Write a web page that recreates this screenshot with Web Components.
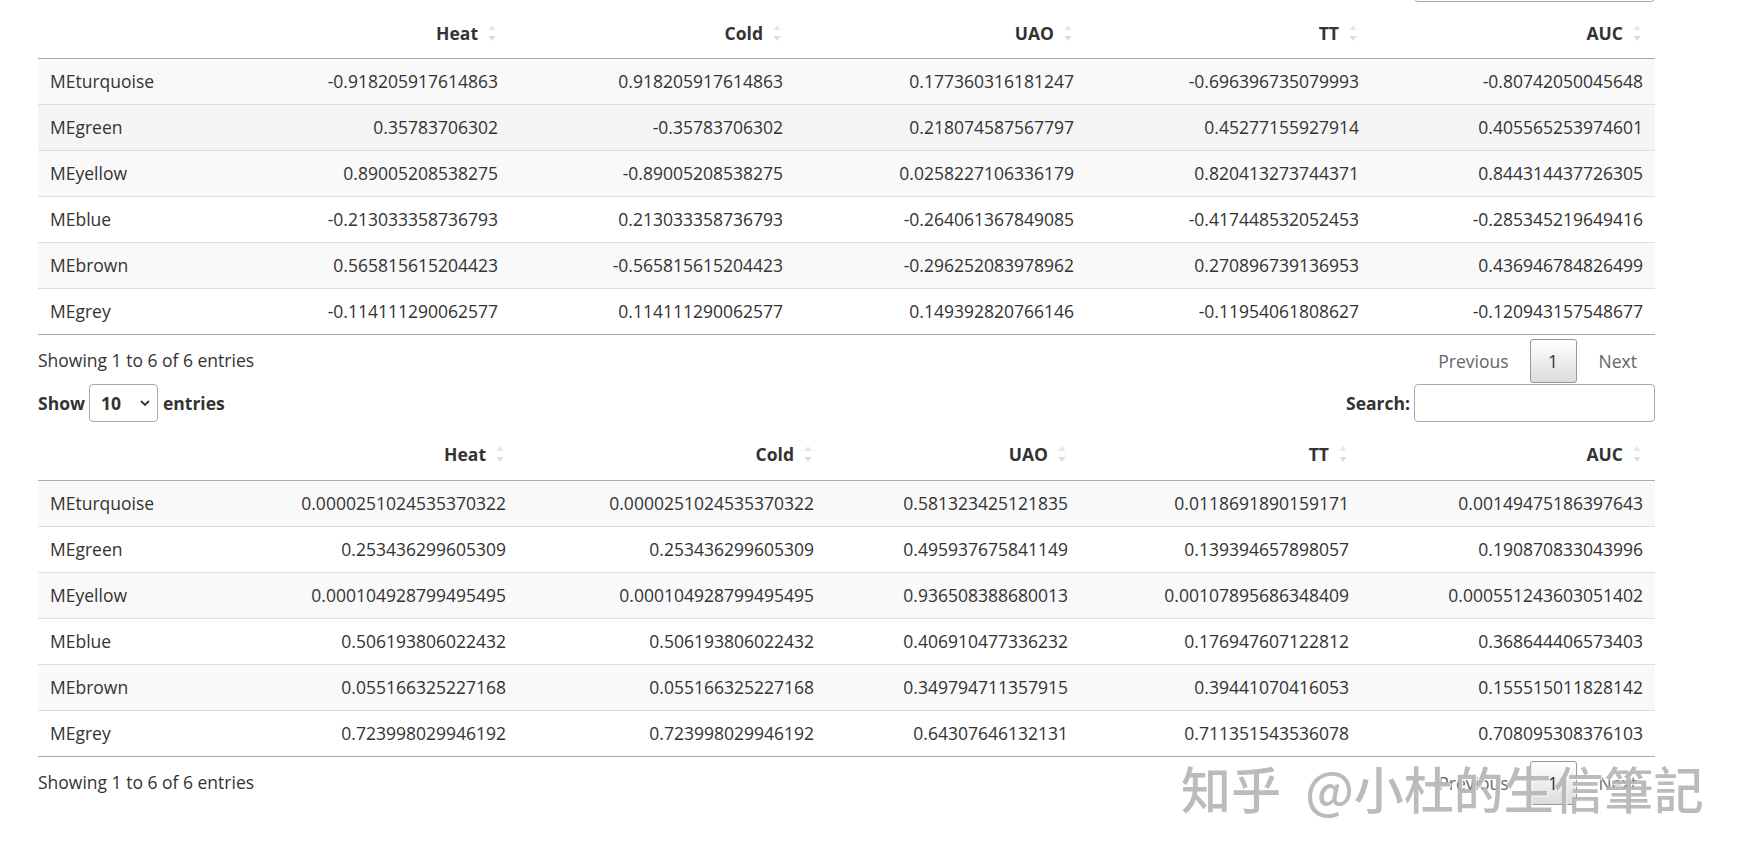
<!DOCTYPE html>
<html lang="en">
<head>
<meta charset="utf-8">
<title>Module trait tables</title>
<style>
    html, body { margin: 0; height: 100%; overflow: hidden; background: #fff; }
    body { font: 17.5px/1.4 "Open Sans", sans-serif; color: #333; }
    main { padding: 0 93px 0 38px; transform: translateY(-36px); }
</style>
</head>
<body>
<main>
    <dt-panel cut cols="150px 322px 285px 291px 285px 284px" head-height="57px">
        <dt-head labels="Heat,Cold,UAO,TT,AUC"></dt-head>
        <dt-row values="MEturquoise,-0.918205917614863,0.918205917614863,0.177360316181247,-0.696396735079993,-0.80742050045648"></dt-row>
        <dt-row hover values="MEgreen,0.35783706302,-0.35783706302,0.218074587567797,0.45277155927914,0.405565253974601"></dt-row>
        <dt-row values="MEyellow,0.89005208538275,-0.89005208538275,0.0258227106336179,0.820413273744371,0.844314437726305"></dt-row>
        <dt-row values="MEblue,-0.213033358736793,0.213033358736793,-0.264061367849085,-0.417448532052453,-0.285345219649416"></dt-row>
        <dt-row values="MEbrown,0.565815615204423,-0.565815615204423,-0.296252083978962,0.270896739136953,0.436946784826499"></dt-row>
        <dt-row values="MEgrey,-0.114111290062577,0.114111290062577,0.149392820766146,-0.11954061808627,-0.120943157548677"></dt-row>
    </dt-panel>
    <dt-panel cols="150px 330px 308px 254px 281px 294px" head-height="59px">
        <dt-head labels="Heat,Cold,UAO,TT,AUC"></dt-head>
        <dt-row values="MEturquoise,0.0000251024535370322,0.0000251024535370322,0.581323425121835,0.0118691890159171,0.00149475186397643"></dt-row>
        <dt-row values="MEgreen,0.253436299605309,0.253436299605309,0.495937675841149,0.139394657898057,0.190870833043996"></dt-row>
        <dt-row values="MEyellow,0.000104928799495495,0.000104928799495495,0.936508388680013,0.00107895686348409,0.000551243603051402"></dt-row>
        <dt-row values="MEblue,0.506193806022432,0.506193806022432,0.406910477336232,0.176947607122812,0.368644406573403"></dt-row>
        <dt-row values="MEbrown,0.055166325227168,0.055166325227168,0.349794711357915,0.39441070416053,0.155515011828142"></dt-row>
        <dt-row values="MEgrey,0.723998029946192,0.723998029946192,0.64307646132131,0.711351543536078,0.708095308376103"></dt-row>
    </dt-panel>
</main>
<zh-watermark>知乎 @小杜的生信筆記</zh-watermark>

<script>
(function () {
    'use strict';

    const sortIcon = `
        <svg width="8" height="18" viewBox="0 0 8 18" aria-hidden="true">
            <path d="M4 1 L7.5 6 H.5 Z" fill="#e6e6e6"/>
            <path d="M.5 12 H7.5 L4 17 Z" fill="#dcdcdc"/>
        </svg>`;

    class DtHead extends HTMLElement {
        connectedCallback () {
            const labels = this.getAttribute('labels').split(',');
            const cells = labels.map(label => `<div class="th"><span>${label}</span>${sortIcon}</div>`).join('');
            this.attachShadow({ mode: 'open' }).innerHTML = `
                <style>
                    :host {
                        display: grid;
                        grid-template-columns: var(--cols);
                        height: var(--head-height);
                        box-sizing: border-box;
                        border-bottom: 1px solid #aaa;
                    }
                    .th {
                        display: flex;
                        justify-content: flex-end;
                        align-items: center;
                        gap: 10px;
                        padding-right: 14px;
                        font-weight: 700;
                    }
                    span { padding-top: 6px; }
                    svg { padding-top: 6px; }
                </style>
                <div></div>${cells}`;
        }
    }

    class DtRow extends HTMLElement {
        connectedCallback () {
            const values = this.getAttribute('values').split(',');
            const cells = values.map(v => `<div class="td">${v}</div>`).join('');
            this.attachShadow({ mode: 'open' }).innerHTML = `
                <style>
                    :host {
                        display: grid;
                        grid-template-columns: var(--cols);
                        height: 46px;
                        box-sizing: border-box;
                        border-bottom: 1px solid #ddd;
                        background: #fff;
                    }
                    :host(:nth-of-type(odd)) { background: #f9f9f9; }
                    :host([hover]) { background: #f5f5f5; }
                    :host(:last-child) { border-bottom-color: #aaa; }
                    .td {
                        display: flex;
                        align-items: center;
                        justify-content: flex-end;
                        padding: 0 12px;
                    }
                    .td:first-of-type { justify-content: flex-start; }
                </style>
                ${cells}`;
        }
    }

    class DtPager extends HTMLElement {
        constructor () {
            super();
            this.attachShadow({ mode: 'open' }).innerHTML = `
                <style>
                    :host { display: flex; padding-top: 4px; color: #666; }
                    a { height: 44px; box-sizing: border-box; line-height: 45px; }
                    .prev { padding: 0 21px 0 18px; }
                    .next { padding: 0 18px 0 22px; }
                    .current {
                        width: 47px;
                        text-align: center;
                        line-height: 43px;
                        color: #333;
                        border: 1px solid #979797;
                        border-radius: 3px;
                        background: linear-gradient(#fff, #dcdcdc);
                    }
                </style>
                <a class="prev">Previous</a><a class="current">1</a><a class="next">Next</a>`;
        }
    }

    const chevron = 'data:image/svg+xml,' + encodeURIComponent(
        '<svg xmlns="http://www.w3.org/2000/svg" width="10" height="6" viewBox="0 0 10 6">' +
        '<path d="M1 1 L5 5 L9 1" fill="none" stroke="#333" stroke-width="1.8"/></svg>');

    class DtPanel extends HTMLElement {
        connectedCallback () {
            this.style.setProperty('--cols', this.getAttribute('cols'));
            if (this.hasAttribute('head-height')) {
                this.style.setProperty('--head-height', this.getAttribute('head-height'));
            }
            // the first table is scrolled off: only the bottom of its search box shows
            const top = this.hasAttribute('cut')
                ? '<span></span><input type="search" aria-label="Search">'
                : `<label>Show <select><option>10</option><option>25</option></select> entries</label>
                   <label>Search: <input type="search"></label>`;
            this.attachShadow({ mode: 'open' }).innerHTML = `
                <style>
                    :host { display: block; --head-height: 59px; }
                    .top, .bottom { display: flex; justify-content: space-between; }
                    .top { height: 38px; align-items: center; font-weight: 700; }
                    .bottom { height: 49px; }
                    .info { line-height: 50px; }
                    label { display: flex; align-items: center; gap: 4px; }
                    select {
                        appearance: none;
                        width: 69px;
                        height: 38px;
                        margin: 0 1px 0 0;
                        padding: 0 0 0 11px;
                        font: inherit;
                        color: inherit;
                        background: #fff url("${chevron}") no-repeat right 7px center;
                        border: 1px solid #aaa;
                        border-radius: 4px;
                    }
                    input {
                        width: 241px;
                        height: 38px;
                        box-sizing: border-box;
                        margin: 0;
                        background: #fff;
                        border: 1px solid #aaa;
                        border-radius: 4px;
                    }
                </style>
                <div class="top">${top}</div>
                <slot></slot>
                <div class="bottom">
                    <div class="info">Showing 1 to 6 of 6 entries</div>
                    <dt-pager></dt-pager>
                </div>`;
        }
    }

    class ZhWatermark extends HTMLElement {
        constructor () {
            super();
            this.attachShadow({ mode: 'open' }).innerHTML = `
                <style>
                    :host {
                        position: absolute;
                        z-index: 5;
                        left: 1181px;
                        top: 752px;
                        font: 500 50px/70px "Noto Sans CJK SC", sans-serif;
                        word-spacing: 13px;
                        color: rgba(170, 170, 170, .8);
                        white-space: nowrap;
                        text-shadow: 1px 1px 1px rgba(255, 255, 255, .9);
                    }
                </style>
                <slot></slot>`;
        }
    }

    window.customElements.define('dt-head', DtHead);
    window.customElements.define('dt-row', DtRow);
    window.customElements.define('dt-pager', DtPager);
    window.customElements.define('dt-panel', DtPanel);
    window.customElements.define('zh-watermark', ZhWatermark);
})();
</script>
</body>
</html>
